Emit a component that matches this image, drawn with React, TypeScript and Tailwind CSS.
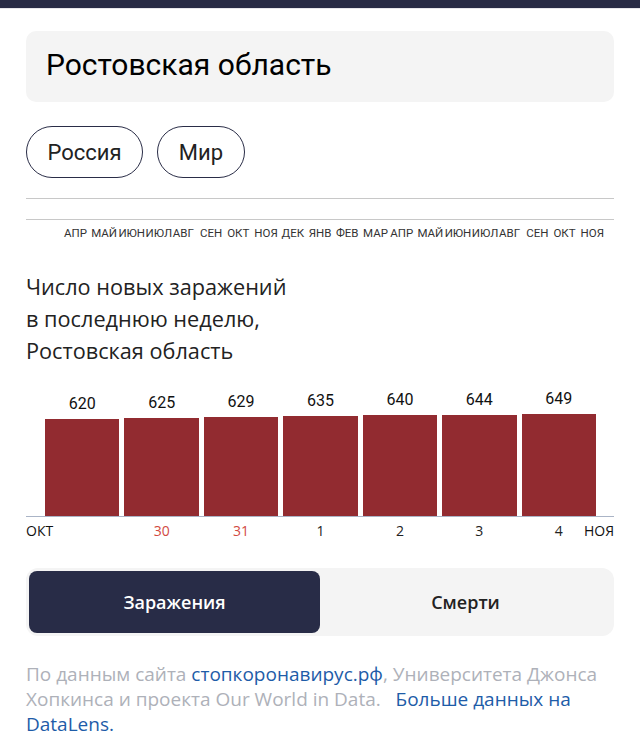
import React from "react";

const months = [
  "АПР", "МАЙ", "ИЮН", "ИЮЛ", "АВГ", "СЕН", "ОКТ", "НОЯ", "ДЕК", "ЯНВ",
  "ФЕВ", "МАР", "АПР", "МАЙ", "ИЮН", "ИЮЛ", "АВГ", "СЕН", "ОКТ", "НОЯ",
];

const days = [
  { value: 620, label: "", weekend: false },
  { value: 625, label: "30", weekend: true },
  { value: 629, label: "31", weekend: true },
  { value: 635, label: "1", weekend: false },
  { value: 640, label: "2", weekend: false },
  { value: 644, label: "3", weekend: false },
  { value: 649, label: "4", weekend: false },
];

const sans = "font-['Open_Sans','Noto_Sans',sans-serif]";
const roboto = "font-['Roboto','Noto_Sans',sans-serif]";

export default function App() {
  return (
    <div className="w-[640px] h-[750px] bg-white overflow-hidden">
      {/* top bar */}
      <div className="h-2 bg-[#282b45]" />
      <div className="h-px bg-[#e6e6ea]" />

      <div className="px-[26px]">
        {/* region */}
        <div className={`mt-[22px] h-[71px] rounded-[10px] bg-[#f4f4f4] flex items-center px-5 pb-[5px] ${roboto} text-[30px] text-black`}>
          Ростовская область
        </div>

        {/* scope pills */}
        <div className="mt-6 flex gap-[14px]">
          <button className={`h-[52px] w-[117px] rounded-full border border-[#2a2d47] ${roboto} text-[22px] text-[#222]`}>
            Россия
          </button>
          <button className={`h-[52px] w-[88px] rounded-full border border-[#2a2d47] ${roboto} text-[22px] text-[#222]`}>
            Мир
          </button>
        </div>

        {/* timeline */}
        <div className="mt-5 h-px bg-[#c8c8c8]" />
        <div className="mt-5 h-px bg-[#c8c8c8]" />
        <div className={`mt-[6px] ml-[38px] grid grid-cols-[repeat(20,27.2px)] ${roboto} text-[11.5px] leading-[14px] text-[#333]`}>
          {months.map((m, i) => (
            <span key={i} className="whitespace-nowrap">
              {m}
            </span>
          ))}
        </div>

        {/* heading */}
        <div className={`mt-[31px] ${sans} text-[21.7px] leading-[32px] text-[#222]`}>
          <div>Число новых заражений</div>
          <div>в последнюю неделю,</div>
          <div>Ростовская область</div>
        </div>

        {/* chart */}
        <div className="mt-[22px]">
          <div className="flex items-end gap-[5px] pl-[19px] pr-[18px]">
            {days.map((d, i) => (
              <div key={i} className="flex-1 flex flex-col items-center">
                <span className={`${roboto} text-[16px] leading-[20px] text-[#111] mb-[5px]`}>{d.value}</span>
                <div className="w-full bg-[#922b30]" style={{ height: Math.round(d.value * 0.1571) }} />
              </div>
            ))}
          </div>
          <div className="h-px bg-[#aab4c6]" />
          <div className={`mt-[4px] flex items-center ${sans} text-[14px] leading-[20px]`}>
            <div className="w-[19px]">
              <span className="text-[#111]">ОКТ</span>
            </div>
            <div className="flex-1 flex gap-[5px]">
              {days.map((d, i) => (
                <span key={i} className={`flex-1 text-center ${d.weekend ? "text-[#d24a3f]" : "text-[#222]"}`}>
                  {d.label}
                </span>
              ))}
            </div>
            <div className="w-[18px] flex justify-end">
              <span className="text-[#111]">НОЯ</span>
            </div>
          </div>
        </div>

        {/* toggle */}
        <div className={`mt-[27px] h-[68px] rounded-[12px] bg-[#f4f4f4] flex p-[3px] ${sans} text-[18px] font-semibold`}>
          <button className="w-[291px] rounded-[8px] bg-[#282c47] text-white">Заражения</button>
          <button className="flex-1 text-[#222]">Смерти</button>
        </div>

        {/* footer */}
        <p className={`mt-[26px] ${sans} text-[19px] leading-[25px] text-[#aeb1b9]`}>
          По данным сайта <span className="text-[#1e5ca8]">стопкоронавирус.рф</span>, Университета Джонса
          Хопкинса и проекта Our World in Data.&nbsp;&nbsp; <span className="text-[#1e5ca8]">Больше данных на DataLens.</span>
        </p>
      </div>
    </div>
  );
}
